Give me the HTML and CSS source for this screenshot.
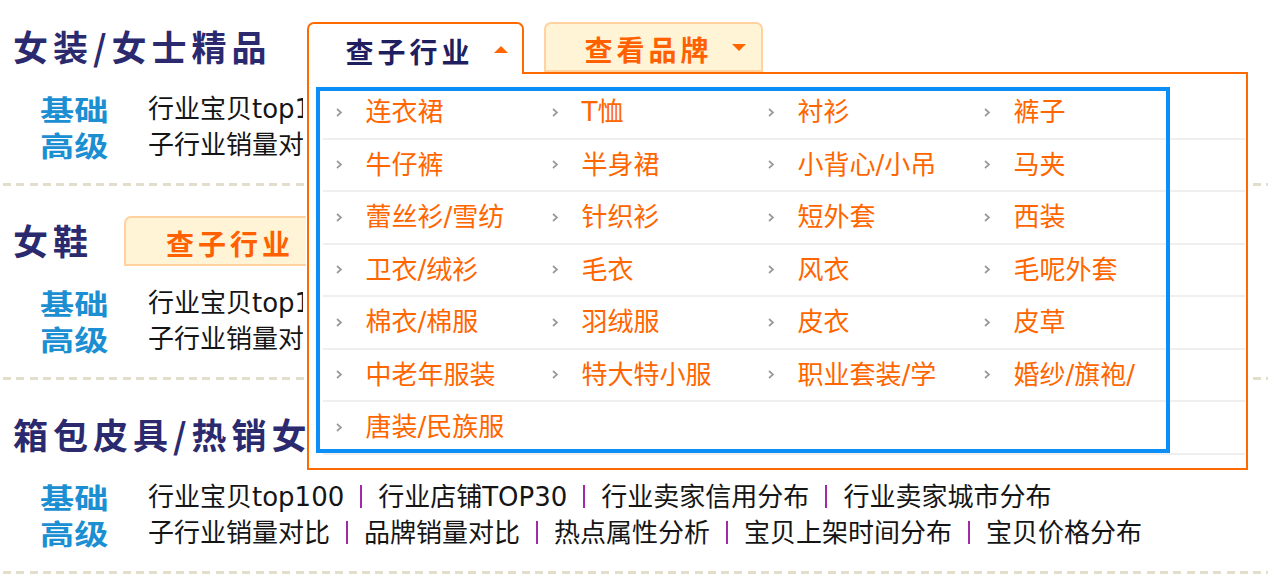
FILE: index.html
```html
<!DOCTYPE html>
<html lang="zh-CN">
<head>
<meta charset="utf-8">
<title>行业分析</title>
<link rel="stylesheet" href="styles.css">
</head>
<body>
<div class="page">

  <section class="cat cat-first">
    <div class="cat-head">
      <h2 class="cat-title">女装/女士精品</h2>
      <div class="tabs tabs-a">
        <div class="tab-wrap">
          <div class="tab tab-on"><span class="tab-text">查子行业</span><span class="tri tri-up"></span></div>
          <div class="drop">
            <ul class="drop-list">
              <li class="drop-row">
                <a class="drop-item"><svg class="chev" viewBox="0 0 6 9"><polyline points="1,1 5,4.5 1,8"/></svg><span>连衣裙</span></a>
                <a class="drop-item"><svg class="chev" viewBox="0 0 6 9"><polyline points="1,1 5,4.5 1,8"/></svg><span>T恤</span></a>
                <a class="drop-item"><svg class="chev" viewBox="0 0 6 9"><polyline points="1,1 5,4.5 1,8"/></svg><span>衬衫</span></a>
                <a class="drop-item"><svg class="chev" viewBox="0 0 6 9"><polyline points="1,1 5,4.5 1,8"/></svg><span>裤子</span></a>
              </li>
              <li class="drop-row">
                <a class="drop-item"><svg class="chev" viewBox="0 0 6 9"><polyline points="1,1 5,4.5 1,8"/></svg><span>牛仔裤</span></a>
                <a class="drop-item"><svg class="chev" viewBox="0 0 6 9"><polyline points="1,1 5,4.5 1,8"/></svg><span>半身裙</span></a>
                <a class="drop-item"><svg class="chev" viewBox="0 0 6 9"><polyline points="1,1 5,4.5 1,8"/></svg><span>小背心/小吊</span></a>
                <a class="drop-item"><svg class="chev" viewBox="0 0 6 9"><polyline points="1,1 5,4.5 1,8"/></svg><span>马夹</span></a>
              </li>
              <li class="drop-row">
                <a class="drop-item"><svg class="chev" viewBox="0 0 6 9"><polyline points="1,1 5,4.5 1,8"/></svg><span>蕾丝衫/雪纺</span></a>
                <a class="drop-item"><svg class="chev" viewBox="0 0 6 9"><polyline points="1,1 5,4.5 1,8"/></svg><span>针织衫</span></a>
                <a class="drop-item"><svg class="chev" viewBox="0 0 6 9"><polyline points="1,1 5,4.5 1,8"/></svg><span>短外套</span></a>
                <a class="drop-item"><svg class="chev" viewBox="0 0 6 9"><polyline points="1,1 5,4.5 1,8"/></svg><span>西装</span></a>
              </li>
              <li class="drop-row">
                <a class="drop-item"><svg class="chev" viewBox="0 0 6 9"><polyline points="1,1 5,4.5 1,8"/></svg><span>卫衣/绒衫</span></a>
                <a class="drop-item"><svg class="chev" viewBox="0 0 6 9"><polyline points="1,1 5,4.5 1,8"/></svg><span>毛衣</span></a>
                <a class="drop-item"><svg class="chev" viewBox="0 0 6 9"><polyline points="1,1 5,4.5 1,8"/></svg><span>风衣</span></a>
                <a class="drop-item"><svg class="chev" viewBox="0 0 6 9"><polyline points="1,1 5,4.5 1,8"/></svg><span>毛呢外套</span></a>
              </li>
              <li class="drop-row">
                <a class="drop-item"><svg class="chev" viewBox="0 0 6 9"><polyline points="1,1 5,4.5 1,8"/></svg><span>棉衣/棉服</span></a>
                <a class="drop-item"><svg class="chev" viewBox="0 0 6 9"><polyline points="1,1 5,4.5 1,8"/></svg><span>羽绒服</span></a>
                <a class="drop-item"><svg class="chev" viewBox="0 0 6 9"><polyline points="1,1 5,4.5 1,8"/></svg><span>皮衣</span></a>
                <a class="drop-item"><svg class="chev" viewBox="0 0 6 9"><polyline points="1,1 5,4.5 1,8"/></svg><span>皮草</span></a>
              </li>
              <li class="drop-row">
                <a class="drop-item"><svg class="chev" viewBox="0 0 6 9"><polyline points="1,1 5,4.5 1,8"/></svg><span>中老年服装</span></a>
                <a class="drop-item"><svg class="chev" viewBox="0 0 6 9"><polyline points="1,1 5,4.5 1,8"/></svg><span>特大特小服</span></a>
                <a class="drop-item"><svg class="chev" viewBox="0 0 6 9"><polyline points="1,1 5,4.5 1,8"/></svg><span>职业套装/学</span></a>
                <a class="drop-item"><svg class="chev" viewBox="0 0 6 9"><polyline points="1,1 5,4.5 1,8"/></svg><span>婚纱/旗袍/</span></a>
              </li>
              <li class="drop-row">
                <a class="drop-item"><svg class="chev" viewBox="0 0 6 9"><polyline points="1,1 5,4.5 1,8"/></svg><span>唐装/民族服</span></a>
              </li>
            </ul>
            <div class="highlight"></div>
          </div>
        </div>
        <div class="tab tab-off tab-brand"><span class="tab-text">查看品牌</span><span class="tri tri-down"></span></div>
      </div>
    </div>
    <div class="links links-covered">
      <div class="line"><span class="lbl">基础</span><span class="items">行业宝贝top100<i class="sep"></i>行业店铺TOP30<i class="sep"></i>行业卖家信用分布<i class="sep"></i>行业卖家城市分布</span></div>
      <div class="line"><span class="lbl">高级</span><span class="items">子行业销量对比<i class="sep"></i>品牌销量对比<i class="sep"></i>热点属性分析<i class="sep"></i>宝贝上架时间分布<i class="sep"></i>宝贝价格分布</span></div>
    </div>
    <div class="divider"></div>
  </section>

  <section class="cat">
    <div class="cat-head head-covered">
      <h2 class="cat-title">女鞋</h2>
      <div class="tabs tabs-b">
        <div class="tab tab-off"><span class="tab-text">查子行业</span><span class="tri tri-down"></span></div>
        <div class="tab tab-off tab-brand"><span class="tab-text">查看品牌</span><span class="tri tri-down"></span></div>
      </div>
    </div>
    <div class="links links-covered">
      <div class="line"><span class="lbl">基础</span><span class="items">行业宝贝top100<i class="sep"></i>行业店铺TOP30<i class="sep"></i>行业卖家信用分布<i class="sep"></i>行业卖家城市分布</span></div>
      <div class="line"><span class="lbl">高级</span><span class="items">子行业销量对比<i class="sep"></i>品牌销量对比<i class="sep"></i>热点属性分析<i class="sep"></i>宝贝上架时间分布<i class="sep"></i>宝贝价格分布</span></div>
    </div>
    <div class="divider"></div>
  </section>

  <section class="cat">
    <div class="cat-head head-covered">
      <h2 class="cat-title">箱包皮具/热销女包/男包</h2>
      <div class="tabs tabs-b">
        <div class="tab tab-off"><span class="tab-text">查子行业</span><span class="tri tri-down"></span></div>
        <div class="tab tab-off tab-brand"><span class="tab-text">查看品牌</span><span class="tri tri-down"></span></div>
      </div>
    </div>
    <div class="links">
      <div class="line"><span class="lbl">基础</span><span class="items">行业宝贝top100<i class="sep"></i>行业店铺TOP30<i class="sep"></i>行业卖家信用分布<i class="sep"></i>行业卖家城市分布</span></div>
      <div class="line"><span class="lbl">高级</span><span class="items">子行业销量对比<i class="sep"></i>品牌销量对比<i class="sep"></i>热点属性分析<i class="sep"></i>宝贝上架时间分布<i class="sep"></i>宝贝价格分布</span></div>
    </div>
    <div class="divider"></div>
  </section>

</div>
</body>
</html>
```

FILE: styles.css
```css
* {
  box-sizing: border-box;
  margin: 0;
  padding: 0;
}

html, body {
  background: #ffffff;
}

body {
  width: 1268px;
  height: 587px;
  overflow: hidden;
  font-family: "DejaVu Sans", "Noto Sans CJK SC", sans-serif;
  color: #1a1a1a;
}

.page {
  width: 1268px;
}

.cat {
  padding-top: 30px;
}

.cat-first {
  padding-top: 22px;
}

.cat-head {
  display: flex;
  align-items: flex-start;
  height: 52px;
  white-space: nowrap;
}

/* the part of a section that lies under the open dropdown */
.head-covered {
  width: 306px;
  overflow: hidden;
}

.links-covered .line {
  width: 303px;
  overflow: hidden;
}

.cat-title {
  flex: none;
  font-family: "Noto Sans CJK SC", sans-serif;
  font-size: 35px;
  font-weight: 700;
  letter-spacing: 5px;
  color: #2b2a6e;
  line-height: 48px;
  padding-left: 13px;
  white-space: nowrap;
}

.tabs {
  flex: none;
  display: flex;
  align-items: flex-start;
  height: 52px;
}

.tabs-a {
  margin-left: 35px;
}

.tabs-b {
  margin-left: 31px;
}

.tab-wrap {
  position: relative;
}

.tab {
  flex: none;
  display: flex;
  align-items: center;
  height: 52px;
  padding-top: 3px;
  font-family: "Noto Sans CJK SC", sans-serif;
  font-size: 28px;
  font-weight: 700;
  letter-spacing: 4px;
  line-height: 1;
  white-space: nowrap;
}

.tab-on {
  position: relative;
  z-index: 6;
  width: 217px;
  padding-left: 37px;
  background: #ffffff;
  border: 2px solid #ff6a00;
  border-bottom: 0;
  border-radius: 7px 7px 0 0;
  color: #1f1f5f;
}

.tab-off {
  width: 217px;
  height: 50px;
  padding-left: 40px;
  background: #fff4d5;
  border: 2px solid #ffd2a0;
  border-radius: 7px 7px 0 0;
  color: #ff6000;
}

.tab-brand {
  width: 219px;
  margin-left: 20px;
  padding-left: 39px;
}

.tri {
  display: block;
  width: 0;
  height: 0;
  border-left: 7px solid transparent;
  border-right: 7px solid transparent;
}

.tri-up {
  margin-left: 20px;
  margin-top: -2px;
  border-bottom: 7px solid #ff6600;
}

.tri-down {
  margin-left: 19px;
  margin-top: -2px;
  border-top: 7px solid #ff6600;
}

/* dropdown */
.drop {
  position: absolute;
  left: 0;
  top: 50px;
  z-index: 5;
  width: 941px;
  height: 398px;
  padding: 13px 1px 0 14px;
  background: #ffffff;
  border: 2px solid #ff6a00;
}

.drop-list {
  list-style: none;
}

.drop-row {
  display: grid;
  grid-template-columns: repeat(4, 216px);
  align-items: center;
  height: 52.5px;
  border-bottom: 2px solid #efefef;
}

.drop-item {
  display: flex;
  align-items: center;
  padding-left: 13px;
  font-size: 26px;
  line-height: 30px;
  color: #ff6600;
  white-space: nowrap;
  overflow: hidden;
}

.chev {
  flex: none;
  width: 6px;
  height: 9px;
  margin-right: 24px;
  fill: none;
  stroke: #9a9a9a;
  stroke-width: 1.7;
}

.highlight {
  position: absolute;
  left: 7px;
  top: 13px;
  width: 854px;
  height: 366px;
  border: 4px solid #0b8ef5;
  pointer-events: none;
}

/* link rows */
.links {
  margin-top: 17px;
}

.line {
  display: flex;
  align-items: center;
  height: 36px;
  padding-left: 40px;
  white-space: nowrap;
}

.lbl {
  flex: none;
  display: block;
  width: 108px;
  font-family: "Noto Sans CJK SC", sans-serif;
  font-size: 28px;
  font-weight: 700;
  line-height: 36px;
  color: #1b8fd2;
  transform: scaleX(1.22);
  transform-origin: left center;
}

.items {
  display: block;
  font-size: 26px;
  line-height: 36px;
  color: #151515;
}

.sep {
  display: inline-block;
  width: 2px;
  height: 23px;
  margin: 0 16px;
  vertical-align: -2px;
  background: #a02aa8;
}

.divider {
  height: 3px;
  margin: 20px 0 0 3px;
  background: repeating-linear-gradient(90deg, #e2decb 0 8px, transparent 8px 13.3px);
}
```
